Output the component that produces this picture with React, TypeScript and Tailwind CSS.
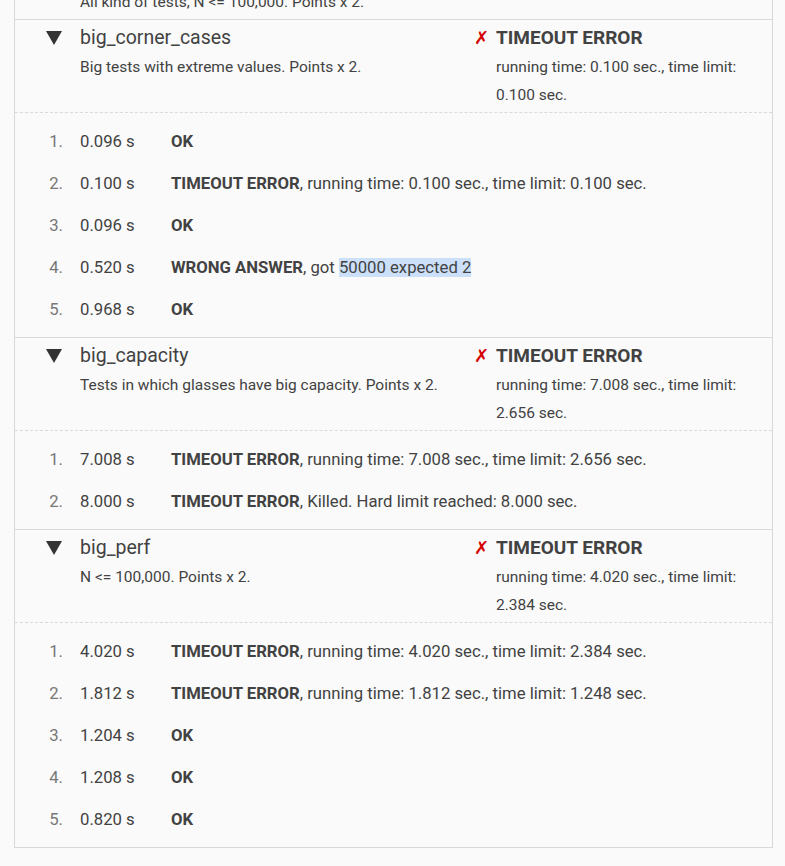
import React from "react";

type Test = { time: string; status: string; detail?: string; highlight?: string };
type Group = {
  name: string;
  desc: string;
  verdict: string;
  info: string;
  tests: Test[];
};

const GROUPS: Group[] = [
  {
    name: "big_corner_cases",
    desc: "Big tests with extreme values. Points x 2.",
    verdict: "TIMEOUT ERROR",
    info: "running time: 0.100 sec., time limit: 0.100 sec.",
    tests: [
      { time: "0.096 s", status: "OK" },
      { time: "0.100 s", status: "TIMEOUT ERROR", detail: ", running time: 0.100 sec., time limit: 0.100 sec." },
      { time: "0.096 s", status: "OK" },
      { time: "0.520 s", status: "WRONG ANSWER", detail: ", got ", highlight: "50000 expected 2" },
      { time: "0.968 s", status: "OK" },
    ],
  },
  {
    name: "big_capacity",
    desc: "Tests in which glasses have big capacity. Points x 2.",
    verdict: "TIMEOUT ERROR",
    info: "running time: 7.008 sec., time limit: 2.656 sec.",
    tests: [
      { time: "7.008 s", status: "TIMEOUT ERROR", detail: ", running time: 7.008 sec., time limit: 2.656 sec." },
      { time: "8.000 s", status: "TIMEOUT ERROR", detail: ", Killed. Hard limit reached: 8.000 sec." },
    ],
  },
  {
    name: "big_perf",
    desc: "N <= 100,000. Points x 2.",
    verdict: "TIMEOUT ERROR",
    info: "running time: 4.020 sec., time limit: 2.384 sec.",
    tests: [
      { time: "4.020 s", status: "TIMEOUT ERROR", detail: ", running time: 4.020 sec., time limit: 2.384 sec." },
      { time: "1.812 s", status: "TIMEOUT ERROR", detail: ", running time: 1.812 sec., time limit: 1.248 sec." },
      { time: "1.204 s", status: "OK" },
      { time: "1.208 s", status: "OK" },
      { time: "0.820 s", status: "OK" },
    ],
  },
];

function Triangle() {
  return (
    <svg width="16" height="14" viewBox="0 0 16 14" className="block">
      <polygon points="0,0 16,0 8,14" fill="#333333" />
    </svg>
  );
}

function GroupBlock({ g }: { g: Group }) {
  return (
    <div className="border-t border-[#d9d9d9]">
      {/* Header */}
      <div className="flex pt-[4px] pb-[3px]">
        <div className="w-[65px] shrink-0 h-[28px] flex items-center pl-[31px]">
          <Triangle />
        </div>
        <div className="w-[394px] shrink-0">
          <div className="h-[28px] leading-[28px] text-[19.5px] text-[#424242]">{g.name}</div>
          <div className="mt-[1px] leading-[28px] text-[15.5px] text-[#424242]">{g.desc}</div>
        </div>
        <div className="flex">
          <div className="w-[22px] shrink-0 h-[28px] leading-[28px] text-[18px] text-[#d40000] font-['DejaVu_Sans',sans-serif]">
            ✗
          </div>
          <div className="w-[262px]">
            <div className="h-[28px] leading-[28px] text-[19px] font-bold text-[#424242]">{g.verdict}</div>
            <div className="mt-[1px] leading-[28px] text-[15.5px] text-[#424242]">{g.info}</div>
          </div>
        </div>
      </div>

      {/* Tests */}
      <div className="border-t border-dashed border-[#dadada] pt-[8px] pb-[6px]">
        {g.tests.map((t, i) => (
          <div key={i} className="flex items-center h-[42px] text-[16.7px] text-[#424242]">
            <div className="w-[48px] shrink-0 text-right text-[#777777]">{i + 1}.</div>
            <div className="w-[91px] shrink-0 ml-[17px]">{t.time}</div>
            <div className="whitespace-nowrap">
              <span className="font-bold">{t.status}</span>
              {t.detail}
              {t.highlight && <span className="bg-[#cce0fa]">{t.highlight}</span>}
            </div>
          </div>
        ))}
      </div>
    </div>
  );
}

export default function App() {
  return (
    <div className="min-h-[866px] bg-[#fafafa] font-['Roboto',sans-serif] overflow-hidden">
      <div className="ml-[14px] w-[759px] border-x border-b border-[#d9d9d9]">
        {/* Tail of the previous group, scrolled off the top */}
        <div className="h-[19px] overflow-hidden">
          <div className="mt-[-12px] pl-[65px] leading-[28px] text-[15.5px] text-[#424242]">
            All kind of tests, N &lt;= 100,000. Points x 2.
          </div>
        </div>
        {GROUPS.map((g) => (
          <GroupBlock key={g.name} g={g} />
        ))}
      </div>
    </div>
  );
}
